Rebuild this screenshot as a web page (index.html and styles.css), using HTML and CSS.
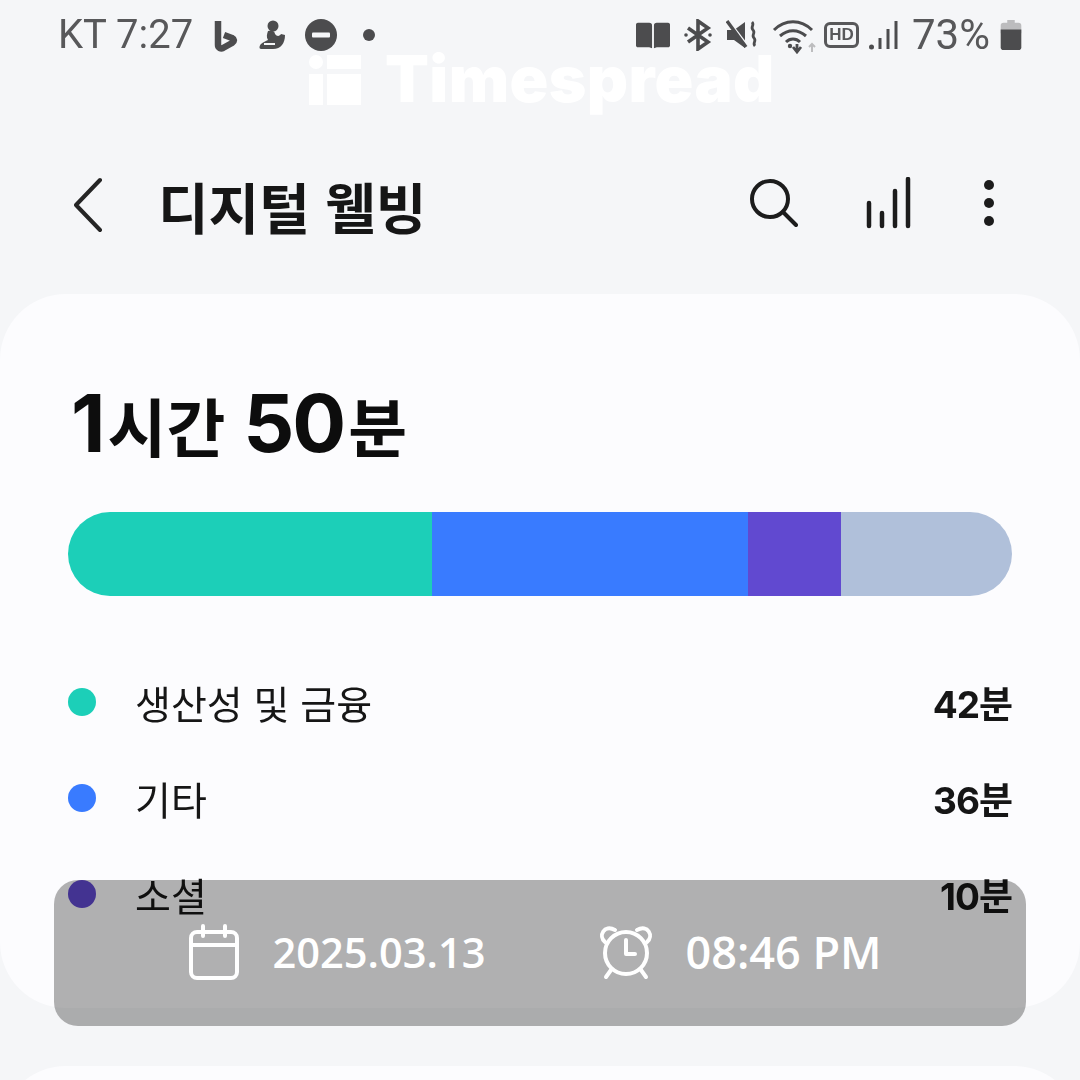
FILE: index.html
```html
<!DOCTYPE html>
<html lang="ko">
<head>
  <meta charset="UTF-8" />
  <title>디지털 웰빙</title>
  <link rel="stylesheet" href="styles.css">
</head>
<body>

  <div class="screen">

    <div class="status">
      <div class="status-left">
        <span class="status-text">KT 7:27</span>
        <svg class="ic" width="24" height="34" viewBox="0 0 24 34" fill="none"><path d="M4 3v24c0 3 3 4 5 3l9-5c3-2 2-4 0-5l-8-3" stroke="#4c4c4e" stroke-width="6.5" stroke-linejoin="round"/></svg>
        <svg class="ic duck" width="26" height="30" viewBox="0 0 26 30"><circle cx="14" cy="6" r="5.5" fill="#4c4c4e"/><path d="M9 11c4-1 7 0 7 3 2 3 5 2 6 0l4 1c0 8-4 14-12 14H2c-2 0-2-3 0-5 2-2 5-3 7-4-2-3-1-6 0-9z" fill="#4c4c4e"/><path d="M5 24h11" stroke="#f5f6f8" stroke-width="2"/></svg>
        <svg class="ic dnd" width="32" height="32" viewBox="0 0 32 32"><circle cx="16" cy="16" r="16" fill="#4c4c4e"/><rect x="7" y="13.5" width="18" height="5" rx="1" fill="#f5f6f8"/></svg>
        <span class="status-dot"></span>
      </div>
      <div class="status-right">
        <svg class="ic" width="34" height="28" viewBox="0 0 36 28"><path d="M2 1h12c2 0 3 1 3 3v24l-3-1H2c-1 0-2-1-2-2V3c0-1 1-2 2-2zM34 1H22c-2 0-3 1-3 3v24l3-1h12c1 0 2-1 2-2V3c0-1-1-2-2-2z" fill="#4c4c4e"/></svg>
        <svg class="ic" width="28" height="32" viewBox="0 0 28 32" fill="none" stroke="#4c4c4e" stroke-width="3.6"><path d="M4 9l20 14-10 7V2l10 7L4 23"/><circle cx="2" cy="16" r="1.8" fill="#4c4c4e" stroke="none"/><circle cx="26" cy="16" r="1.8" fill="#4c4c4e" stroke="none"/></svg>
        <svg class="ic" width="32" height="32" viewBox="0 0 32 32"><path d="M1 11h7l11-8v26L8 21H1z" fill="#4c4c4e"/><path d="M3 2l19 25" stroke="#f5f6f8" stroke-width="2"/><path d="M1 2l19 26" stroke="#4c4c4e" stroke-width="3.4"/><path d="M26 3c3 3-2 5 1 8s-2 5 1 8-2 5 1 8" fill="none" stroke="#4c4c4e" stroke-width="2.8"/></svg>
        <svg class="ic wifi" width="45" height="36" viewBox="0 0 45 36" fill="none"><path d="M2 12c11-11 27-11 38 0M8 18c8-7 18-7 26 0M14 24c4-4 10-4 14 0" stroke="#4c4c4e" stroke-width="3"/><path d="M25 26v6M21 29l4 5 4-5" stroke="#4c4c4e" stroke-width="2.8"/><circle cx="18" cy="28" r="2.2" fill="#4c4c4e"/><path d="M40 34v-7M37 29l3-3 3 3" stroke="#bdbdbf" stroke-width="2"/></svg>
        <span class="hd">HD</span>
        <svg class="ic signal" width="29" height="30" viewBox="0 0 29 30"><circle cx="2.5" cy="27" r="2.5" fill="#4c4c4e"/><path d="M11 29V18M19 29V9M27 29V1" stroke="#4c4c4e" stroke-width="3" fill="none"/></svg>
        <span class="status-text pct">73%</span>
        <svg class="ic batt" width="22" height="30" viewBox="0 0 22 32"><path d="M7 0h8v3h4c2 0 3 1 3 3v8H0V6c0-2 1-3 3-3h4z" fill="#bcbcbe"/><path d="M0 10h22v19c0 2-1 3-3 3H3c-2 0-3-1-3-3z" fill="#4c4c4e"/></svg>
      </div>
    </div>

    <div class="watermark">
      <svg width="52" height="50" viewBox="0 0 52 50" fill="#fff"><circle cx="7" cy="7" r="7"/><rect x="0" y="19" width="14" height="31"/><rect x="18" y="0" width="34" height="14"/><rect x="18" y="19" width="34" height="31"/></svg>
      <span>Timespread</span>
    </div>

    <div class="topbar">
      <svg class="back" width="34" height="56" viewBox="0 0 34 56" fill="none"><path d="M29 3L5 28l24 25" stroke="#252525" stroke-width="4" stroke-linecap="round" stroke-linejoin="round"/></svg>
      <h1 class="title">디지털 웰빙</h1>
      <div class="actions">
        <svg width="48" height="50" viewBox="0 0 48 50" fill="none" stroke="#1c1c1c" stroke-width="4" stroke-linecap="round"><circle cx="20" cy="21" r="18"/><path d="M33 34l13 13"/></svg>
        <svg width="46" height="52" viewBox="0 0 46 52" fill="none" stroke="#1c1c1c" stroke-width="4.5" stroke-linecap="round"><path d="M3 49V26M16 49V36M29 49V14M42 49V2"/></svg>
        <span class="more"><i></i><i></i><i></i></span>
      </div>
    </div>

    <div class="card">
      <div class="total"><b>1</b>시간 <b>50</b>분</div>

      <div class="bar">
        <span class="seg seg-teal"></span>
        <span class="seg seg-blue"></span>
        <span class="seg seg-purple"></span>
        <span class="seg seg-grey"></span>
      </div>

      <ul class="legend">
        <li><span class="dot seg-teal"></span><span class="name">생산성 및 금융</span><span class="val">42분</span></li>
        <li><span class="dot seg-blue"></span><span class="name">기타</span><span class="val">36분</span></li>
        <li><span class="dot seg-purple"></span><span class="name">소셜</span><span class="val">10분</span></li>
      </ul>
    </div>

    <div class="card card-next"></div>

    <div class="stamp">
      <div class="stamp-item date">
        <svg width="50" height="56" viewBox="0 0 50 56" fill="none" stroke="#fff" stroke-width="4" stroke-linecap="round"><rect x="2" y="8" width="46" height="46" rx="6"/><path d="M2 21h46M14 2v10M36 2v10"/></svg>
        <span>2025.03.13</span>
      </div>
      <div class="stamp-item time">
        <svg width="58" height="56" viewBox="0 0 58 56" fill="none" stroke="#fff" stroke-width="4" stroke-linecap="round" stroke-linejoin="round"><circle cx="29" cy="29" r="21"/><path d="M29 16v14h9M8 18C1 12 7 0 18 6M50 18c7-6 1-18-10-12M14 46l-5 7M44 46l5 7"/></svg>
        <span>08:46 PM</span>
      </div>
    </div>

  </div>

</body>
</html>
```

FILE: styles.css
```css
* {
  box-sizing: border-box;
}

html, body {
  margin: 0;
  height: 100%;
}

body {
  background-color: #f5f6f8;
  font-family: "Noto Sans CJK KR", "Noto Sans", sans-serif;
  color: #161616;
}

.screen {
  position: relative;
  width: 1080px;
  height: 1080px;
  overflow: hidden;
}

/* status bar */
.status {
  height: 70px;
  padding: 0 58px;
  display: flex;
  justify-content: space-between;
  align-items: center;
  filter: blur(0.6px);
}

.status-left, .status-right {
  display: flex;
  align-items: center;
}

.status-left {
  gap: 21px;
}

.status-right {
  gap: 14px;
}

.status-text {
  font-family: Roboto, "Liberation Sans", sans-serif;
  font-size: 40px;
  color: #58585a;
  line-height: 1;
}

.status-dot {
  width: 12px;
  height: 12px;
  margin-left: 5px;
  border-radius: 50%;
  background-color: #4c4c4e;
}

.dnd {
  margin-left: -1px;
}

.wifi {
  margin-top: 2px;
}

.hd {
  width: 35px;
  height: 26px;
  margin-left: -7px;
  border: 3px solid #58585a;
  border-radius: 6px;
  font-family: "Liberation Sans", sans-serif;
  font-size: 17px;
  font-weight: bold;
  line-height: 20px;
  text-align: center;
  color: #58585a;
}

.signal {
  margin-left: -4px;
}

.pct {
  font-size: 42px;
}

.batt {
  margin-left: -4px;
}

/* watermark */
.watermark {
  position: absolute;
  left: 309px;
  top: 55px;
  display: flex;
  align-items: flex-start;
  gap: 24px;
  color: #fff;
}

.watermark span {
  font-family: Inter, sans-serif;
  font-size: 64px;
  font-weight: 900;
  letter-spacing: 0.4px;
  line-height: 48px;
}

/* header */
.topbar {
  height: 224px;
  padding: 46px 86px 0 71px;
  display: flex;
  align-items: center;
  filter: blur(0.6px);
}

.back {
  margin-right: 53px;
}

.title {
  margin: 0;
  font-size: 55px;
  font-weight: 700;
  flex: 1;
}

.actions {
  display: flex;
  align-items: center;
  gap: 68px;
  margin-top: -4px;
}

.more {
  display: flex;
  flex-direction: column;
  gap: 8px;
  margin-left: 4px;
}

.more i {
  display: block;
  width: 10px;
  height: 10px;
  border-radius: 50%;
  background-color: #1c1c1c;
}

/* card */
.card {
  height: 714px;
  padding: 85px 68px 0;
  background-color: #fcfcfe;
  border-radius: 66px;
}

.card-next {
  margin-top: 58px;
}

.total {
  padding-left: 3px;
  font-size: 64px;
  font-weight: 700;
  line-height: 88px;
  color: #0d0d0d;
  filter: blur(0.5px);
}

.total b {
  margin-right: 4px;
  font-family: Inter, sans-serif;
  font-size: 80px;
  font-weight: 700;
  letter-spacing: -2px;
}

.bar {
  margin-top: 44px;
  height: 84px;
  display: flex;
  border-radius: 42px;
  overflow: hidden;
}

.seg {
  display: block;
}

.bar .seg-teal { width: 364px; }
.bar .seg-blue { width: 316px; }
.bar .seg-purple { width: 93px; }
.bar .seg-grey { flex: 1; }

.seg-teal { background-color: #1ccfb8; }
.seg-blue { background-color: #397bff; }
.seg-purple { background-color: #6149d0; }
.seg-grey { background-color: #b0c0da; }

.legend {
  list-style: none;
  margin: 58px 0 0;
  padding: 0;
}

.legend li {
  height: 96px;
  display: flex;
  align-items: center;
}

.dot {
  width: 28px;
  height: 28px;
  border-radius: 50%;
  margin-right: 39px;
}

.name {
  flex: 1;
  font-size: 39px;
  filter: blur(0.5px);
}

.val {
  font-family: Inter, "Noto Sans CJK KR", sans-serif;
  font-size: 37px;
  font-weight: 700;
  letter-spacing: -1px;
  filter: blur(0.5px);
}

/* date stamp over the screenshot */
.stamp {
  position: absolute;
  left: 54px;
  top: 880px;
  width: 972px;
  height: 146px;
  padding: 0 9px 3px 0;
  display: flex;
  justify-content: center;
  align-items: center;
  gap: 112px;
  background-color: rgba(0, 0, 0, 0.3);
  border-radius: 24px;
  color: #fff;
}

.stamp-item {
  display: flex;
  align-items: center;
  font-family: "Open Sans", sans-serif;
  font-weight: 600;
}

.date {
  gap: 33px;
  font-size: 41.6px;
}

.time {
  gap: 30px;
  font-size: 45px;
}
```
